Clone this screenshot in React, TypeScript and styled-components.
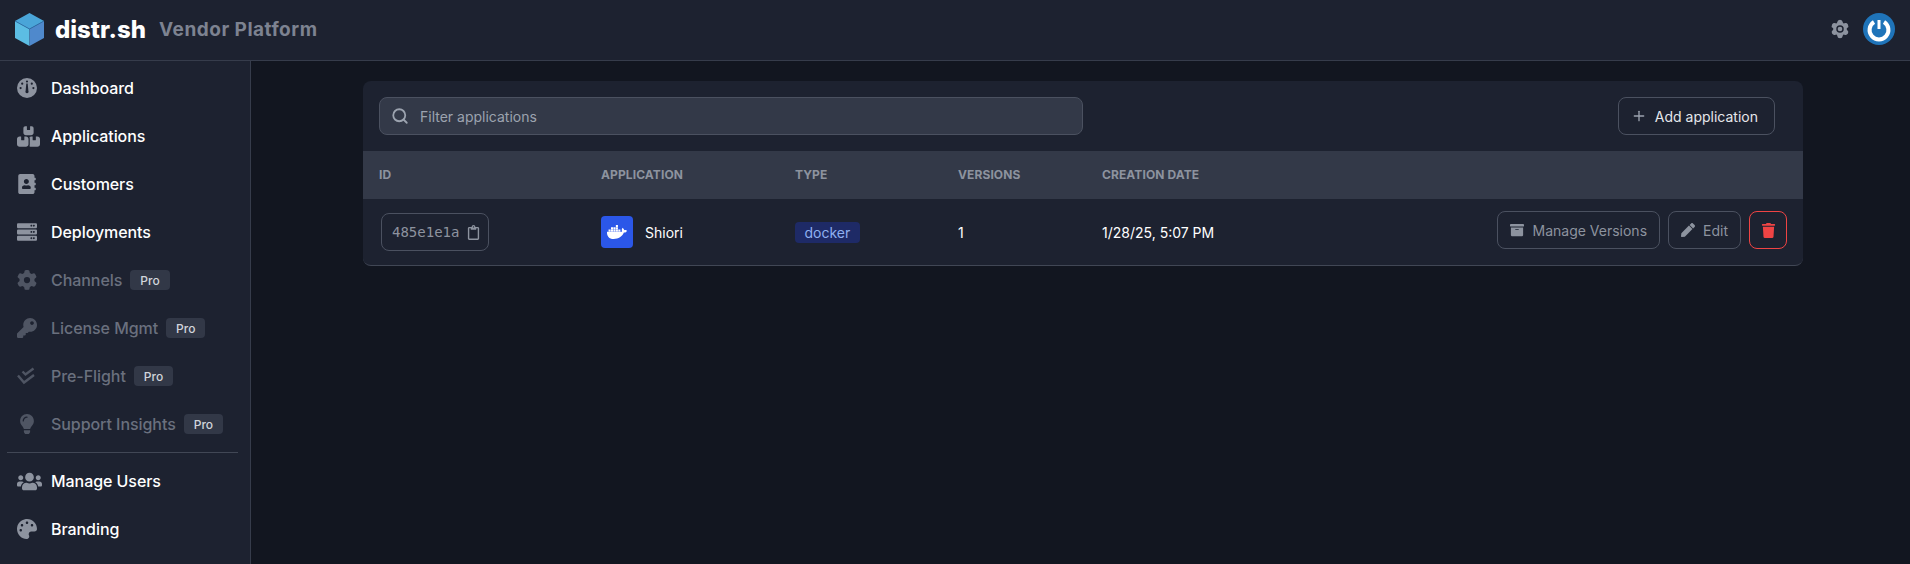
import React from 'react';
import styled, { createGlobalStyle } from 'styled-components';
import { IconType } from 'react-icons';
import {
    FaAddressBook,
    FaArchive,
    FaDocker,
    FaKey,
    FaLightbulb,
    FaPalette,
    FaPen,
    FaRegClipboard,
    FaServer,
    FaTrash,
    FaUsers,
} from 'react-icons/fa';
import { FaBoxesStacked, FaGear } from 'react-icons/fa6';
import { Plus, Search, Settings } from 'lucide-react';

const GlobalStyle = createGlobalStyle`
    html, body {
        margin: 0;
        padding: 0;
        background: #121620;
        font-family: 'Inter', 'Liberation Sans', sans-serif;
    }
    * {
        box-sizing: border-box;
    }
`;

const Page = styled.div`
    width: 1910px;
    height: 564px;
    overflow: hidden;
    display: flex;
    flex-direction: column;
`;

const TopBar = styled.header`
    height: 61px;
    flex: none;
    display: flex;
    align-items: center;
    justify-content: space-between;
    padding: 0 15px 2px 15px;
    background: #1d2230;
    border-bottom: 1px solid #363c4b;
`;

const Brand = styled.div`
    display: flex;
    align-items: center;
`;

const LogoName = styled.span`
    margin-left: 11px;
    font-size: 24px;
    font-weight: 800;
    color: #fff;
`;

const Subtitle = styled.span`
    margin-left: 13px;
    font-size: 19px;
    font-weight: 700;
    letter-spacing: 0.5px;
    color: #7d8391;
`;

const TopActions = styled.div`
    display: flex;
    align-items: center;
    gap: 13px;
    color: #8d939f;
`;

const Body = styled.div`
    flex: 1;
    display: flex;
    min-height: 0;
`;

const Sidebar = styled.nav`
    width: 251px;
    flex: none;
    padding: 3px 12px;
    background: #1d2230;
    border-right: 1px solid #363c4b;
`;

const NavItem = styled.a<{ $disabled?: boolean }>`
    height: 48px;
    display: flex;
    align-items: center;
    padding-left: 5px;
    font-size: 16px;
    font-weight: 450;
    letter-spacing: -0.06px;
    color: ${p => (p.$disabled ? '#6a707e' : '#fff')};
    svg {
        color: ${p => (p.$disabled ? '#4f5563' : '#8d939f')};
    }
`;

const NavIcon = styled.span`
    width: 34px;
    flex: none;
    display: flex;
    align-items: center;
`;

const ProTag = styled.span`
    margin-left: 8px;
    padding: 0 10px;
    height: 20px;
    display: flex;
    align-items: center;
    border-radius: 4px;
    background: #323847;
    font-size: 12px;
    font-weight: 500;
    letter-spacing: 0;
    color: #d1d5db;
`;

const Divider = styled.hr`
    margin: 4px 0 4px -5px;
    border: 0;
    border-top: 1px solid #414755;
`;

const Main = styled.main`
    flex: 1;
    padding: 20px 107px 0 112px;
    background: #121620;
`;

const Panel = styled.section`
    background: #1d2230;
    border-radius: 8px;
    border-bottom: 1px solid #414755;
    overflow: hidden;
`;

const Toolbar = styled.div`
    height: 70px;
    display: flex;
    align-items: center;
    justify-content: space-between;
    padding: 0 28px 0 16px;
`;

const SearchBox = styled.div`
    width: 704px;
    height: 38px;
    display: flex;
    align-items: center;
    gap: 11px;
    padding: 0 11px;
    border-radius: 8px;
    background: #333948;
    border: 1px solid #4b5160;
    color: #9ca3af;
    font-size: 14px;
`;

const Button = styled.button<{ $tone?: 'light' | 'muted' | 'danger' }>`
    height: 38px;
    display: flex;
    align-items: center;
    justify-content: center;
    gap: 8px;
    padding: ${p => (p.$tone === 'light' ? '0 16px 0 12px' : p.$tone === 'danger' ? '0' : '0 12px')};
    width: ${p => (p.$tone === 'danger' ? '38px' : 'auto')};
    background: transparent;
    border-radius: 8px;
    font-family: inherit;
    font-size: 14px;
    font-weight: 400;
    border: 1px solid ${p => (p.$tone === 'danger' ? '#ef4444' : '#4b5160')};
    color: ${p => (p.$tone === 'light' ? '#e5e7eb' : p.$tone === 'danger' ? '#ef4444' : '#8d939f')};
`;

const Table = styled.table`
    width: 100%;
    border-collapse: collapse;
    table-layout: fixed;
    font-size: 14px;
    color: #fff;
`;

const HeadCell = styled.th`
    height: 48px;
    padding: 0 16px 2px;
    text-align: left;
    background: #333948;
    font-size: 12px;
    font-weight: 700;
    letter-spacing: 0.1px;
    color: #8d939f;
`;

const Cell = styled.td`
    height: 66px;
    padding: 0 16px;
`;

const ActionRow = styled.div`
    display: flex;
    justify-content: flex-end;
    gap: 8px;
    margin-bottom: 4px;
`;

const IdChip = styled.button`
    width: 108px;
    height: 38px;
    margin-left: 2px;
    display: flex;
    align-items: center;
    gap: 7px;
    padding: 0 10px;
    background: transparent;
    border: 1px solid #4b5160;
    border-radius: 8px;
    font-family: 'DejaVu Sans Mono', 'Liberation Mono', monospace;
    font-size: 14px;
    color: #8d939f;
    svg {
        flex: none;
    }
`;

const AppName = styled.div`
    display: flex;
    align-items: center;
    gap: 12px;
`;

const AppIcon = styled.span`
    width: 32px;
    height: 32px;
    display: flex;
    align-items: center;
    justify-content: center;
    border-radius: 4px;
    background: #2b57e8;
    color: #fff;
`;

const TypeBadge = styled.span`
    display: inline-block;
    padding: 2px 9.5px;
    border-radius: 4px;
    background: #1e2a66;
    color: #8fb0f0;
    font-size: 14px;
`;

const Avatar = styled.span`
    width: 32px;
    height: 32px;
    display: block;
`;

const DashboardIcon: IconType = ({ size }) => (
    <svg width={size} height={size} viewBox="0 0 20 20">
        <path
            fill="currentColor"
            fillRule="evenodd"
            d="M10 0a10 10 0 1 1 0 20 10 10 0 0 1 0-20ZM10 2.4a1.1 1.1 0 1 0 0 2.2 1.1 1.1 0 0 0 0-2.2ZM5.2 4.6a1.1 1.1 0 1 0 0 2.2 1.1 1.1 0 0 0 0-2.2ZM14.8 4.6a1.1 1.1 0 1 0 0 2.2 1.1 1.1 0 0 0 0-2.2ZM3.6 9a1.1 1.1 0 1 0 0 2.2 1.1 1.1 0 0 0 0-2.2ZM16.4 9a1.1 1.1 0 1 0 0 2.2 1.1 1.1 0 0 0 0-2.2ZM9.3 5.5 8.6 13a1.6 1.6 0 1 0 2.8 0l-.7-7.5Z"
        />
    </svg>
);

const DoubleCheckIcon: IconType = ({ size }) => (
    <svg width={size} height={size} viewBox="0 0 18 18" fill="none" stroke="currentColor" strokeWidth="2.4">
        <path d="M5.5 4.5 8.5 7.5 16.5 1.5" />
        <path d="M1 8.5 7 15.5 17 8" />
    </svg>
);

interface NavEntry {
    label: string;
    icon: IconType;
    size?: number;
    pro?: boolean;
}

const mainNav: NavEntry[] = [
    { label: 'Dashboard', icon: DashboardIcon },
    { label: 'Applications', icon: FaBoxesStacked, size: 23 },
    { label: 'Customers', icon: FaAddressBook },
    { label: 'Deployments', icon: FaServer },
    { label: 'Channels', icon: FaGear, pro: true },
    { label: 'License Mgmt', icon: FaKey, pro: true },
    { label: 'Pre-Flight', icon: DoubleCheckIcon, size: 18, pro: true },
    { label: 'Support Insights', icon: FaLightbulb, pro: true },
];

const adminNav: NavEntry[] = [
    { label: 'Manage Users', icon: FaUsers, size: 25 },
    { label: 'Branding', icon: FaPalette },
];

const NavLine: React.FC<{ entry: NavEntry }> = ({ entry }) => (
    <NavItem $disabled={entry.pro}>
        <NavIcon>
            <entry.icon size={entry.size || 20} />
        </NavIcon>
        {entry.label}
        {entry.pro && <ProTag>Pro</ProTag>}
    </NavItem>
);

const App: React.FC = () => (
    <Page>
        <GlobalStyle />
        <TopBar>
            <Brand>
                <svg width="29" height="33" viewBox="0 0 29 33">
                    <polygon points="14.5,0 29,8 14.5,16 0,8" fill="#4aa5d8" />
                    <polygon points="0,8 14.5,16 14.5,33 0,25" fill="#5cbde3" />
                    <polygon points="29,8 14.5,16 14.5,33 29,25" fill="#4f89cc" />
                    <polyline points="0,8 14.5,16 29,8" fill="none" stroke="#2c6aa5" strokeWidth="0.8" />
                </svg>
                <LogoName>distr.sh</LogoName>
                <Subtitle>Vendor Platform</Subtitle>
            </Brand>
            <TopActions>
                <Settings size={20} fill="#8d939f">
                    <circle cx="12" cy="12" r="4.5" fill="#1d2230" stroke="none" />
                    <circle cx="12" cy="12" r="2.8" fill="#8d939f" stroke="none" />
                </Settings>
                <Avatar>
                    <svg width="32" height="32" viewBox="0 0 32 32">
                        <circle cx="16" cy="16" r="16" fill="#1f74b9" />
                        <path d="M11 9a9.43 9.43 0 1 0 10 0" fill="none" stroke="#fff" strokeWidth="4" />
                        <path d="M16 7v9" stroke="#fff" strokeWidth="3" />
                    </svg>
                </Avatar>
            </TopActions>
        </TopBar>
        <Body>
            <Sidebar>
                {mainNav.map(entry => (
                    <NavLine key={entry.label} entry={entry} />
                ))}
                <Divider />
                {adminNav.map(entry => (
                    <NavLine key={entry.label} entry={entry} />
                ))}
            </Sidebar>
            <Main>
                <Panel>
                    <Toolbar>
                        <SearchBox>
                            <Search size={18} strokeWidth={2.4} />
                            Filter applications
                        </SearchBox>
                        <Button $tone="light">
                            <Plus size={16} color="#9ca3af" />
                            Add application
                        </Button>
                    </Toolbar>
                    <Table>
                        <colgroup>
                            <col style={{ width: 222 }} />
                            <col style={{ width: 194 }} />
                            <col style={{ width: 163 }} />
                            <col style={{ width: 144 }} />
                            <col style={{ width: 220 }} />
                            <col />
                        </colgroup>
                        <thead>
                            <tr>
                                <HeadCell>ID</HeadCell>
                                <HeadCell>APPLICATION</HeadCell>
                                <HeadCell>TYPE</HeadCell>
                                <HeadCell>VERSIONS</HeadCell>
                                <HeadCell>CREATION DATE</HeadCell>
                                <HeadCell />
                            </tr>
                        </thead>
                        <tbody>
                            <tr>
                                <Cell>
                                    <IdChip>
                                        485e1e1a
                                        <FaRegClipboard size={15} />
                                    </IdChip>
                                </Cell>
                                <Cell>
                                    <AppName>
                                        <AppIcon>
                                            <FaDocker size={20} />
                                        </AppIcon>
                                        Shiori
                                    </AppName>
                                </Cell>
                                <Cell>
                                    <TypeBadge>docker</TypeBadge>
                                </Cell>
                                <Cell>1</Cell>
                                <Cell>1/28/25, 5:07 PM</Cell>
                                <Cell>
                                    <ActionRow>
                                        <Button $tone="muted">
                                            <FaArchive size={14} />
                                            Manage Versions
                                        </Button>
                                        <Button $tone="muted">
                                            <FaPen size={14} />
                                            Edit
                                        </Button>
                                        <Button $tone="danger">
                                            <FaTrash size={15} />
                                        </Button>
                                    </ActionRow>
                                </Cell>
                            </tr>
                        </tbody>
                    </Table>
                </Panel>
            </Main>
        </Body>
    </Page>
);

export default App;
